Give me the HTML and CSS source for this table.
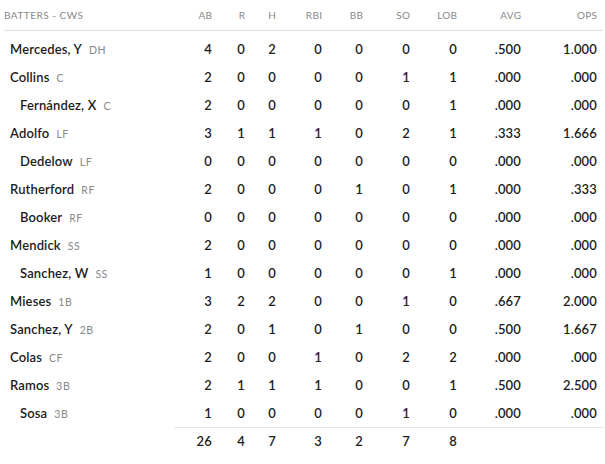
FILE: index.html
```html
<!DOCTYPE html>
<html>
<head>
<meta charset="utf-8">
<link rel="stylesheet" href="styles.css">
</head>
<body>
<div class="box">
  <div class="row head">
    <div class="name">BATTERS - CWS</div>
    <div>AB</div><div>R</div><div>H</div><div>RBI</div><div>BB</div><div>SO</div><div>LOB</div><div>AVG</div><div>OPS</div>
  </div>
  <div class="body">
    <div class="row"><div class="name">Mercedes, Y<span class="pos">DH</span></div><div>4</div><div>0</div><div>2</div><div>0</div><div>0</div><div>0</div><div>0</div><div>.500</div><div>1.000</div></div>
    <div class="row"><div class="name">Collins<span class="pos">C</span></div><div>2</div><div>0</div><div>0</div><div>0</div><div>0</div><div>1</div><div>1</div><div>.000</div><div>.000</div></div>
    <div class="row"><div class="name sub">Fernández, X<span class="pos">C</span></div><div>2</div><div>0</div><div>0</div><div>0</div><div>0</div><div>0</div><div>1</div><div>.000</div><div>.000</div></div>
    <div class="row"><div class="name">Adolfo<span class="pos">LF</span></div><div>3</div><div>1</div><div>1</div><div>1</div><div>0</div><div>2</div><div>1</div><div>.333</div><div>1.666</div></div>
    <div class="row"><div class="name sub">Dedelow<span class="pos">LF</span></div><div>0</div><div>0</div><div>0</div><div>0</div><div>0</div><div>0</div><div>0</div><div>.000</div><div>.000</div></div>
    <div class="row"><div class="name">Rutherford<span class="pos">RF</span></div><div>2</div><div>0</div><div>0</div><div>0</div><div>1</div><div>0</div><div>1</div><div>.000</div><div>.333</div></div>
    <div class="row"><div class="name sub">Booker<span class="pos">RF</span></div><div>0</div><div>0</div><div>0</div><div>0</div><div>0</div><div>0</div><div>0</div><div>.000</div><div>.000</div></div>
    <div class="row"><div class="name">Mendick<span class="pos">SS</span></div><div>2</div><div>0</div><div>0</div><div>0</div><div>0</div><div>0</div><div>0</div><div>.000</div><div>.000</div></div>
    <div class="row"><div class="name sub">Sanchez, W<span class="pos">SS</span></div><div>1</div><div>0</div><div>0</div><div>0</div><div>0</div><div>0</div><div>1</div><div>.000</div><div>.000</div></div>
    <div class="row"><div class="name">Mieses<span class="pos">1B</span></div><div>3</div><div>2</div><div>2</div><div>0</div><div>0</div><div>1</div><div>0</div><div>.667</div><div>2.000</div></div>
    <div class="row"><div class="name">Sanchez, Y<span class="pos">2B</span></div><div>2</div><div>0</div><div>1</div><div>0</div><div>1</div><div>0</div><div>0</div><div>.500</div><div>1.667</div></div>
    <div class="row"><div class="name">Colas<span class="pos">CF</span></div><div>2</div><div>0</div><div>0</div><div>1</div><div>0</div><div>2</div><div>2</div><div>.000</div><div>.000</div></div>
    <div class="row"><div class="name">Ramos<span class="pos">3B</span></div><div>2</div><div>1</div><div>1</div><div>1</div><div>0</div><div>0</div><div>1</div><div>.500</div><div>2.500</div></div>
    <div class="row"><div class="name sub">Sosa<span class="pos">3B</span></div><div>1</div><div>0</div><div>0</div><div>0</div><div>0</div><div>1</div><div>0</div><div>.000</div><div>.000</div></div>
  </div>
  <div class="row total">
    <div class="name blank"></div>
    <div class="line">26</div><div class="line">4</div><div class="line">7</div><div class="line">3</div><div class="line">2</div><div class="line">7</div><div class="line">8</div><div class="line"></div><div class="line"></div><div class="line"></div>
  </div>
</div>
</body>
</html>
```
FILE: styles.css
```css
* { box-sizing: border-box; }
body {
  margin: 0;
  background: #fff;
  font-family: Lato, "Open Sans", sans-serif;
  color: #1c1c1c;
}
.box {
  padding: 0 2px 0 4px;
}
.row {
  display: grid;
  grid-template-columns: 170px 38px 33px 31px 46px 41px 47px 47px 64px 76px 6px;
  align-items: center;
}
.row > div {
  text-align: right;
  white-space: nowrap;
}
.row > .name {
  text-align: left;
}
.head {
  height: 31px;
  border-bottom: 1px solid #e0e0e0;
  font-size: 10px;
  color: #888;
  letter-spacing: 0.5px;
  padding-bottom: 1px;
}
.head > div:not(.name) {
  letter-spacing: 0.3px;
  margin-right: -0.3px;
}
.body {
  padding-top: 4px;
}
.body .row {
  height: 28px;
  font-size: 13px;
  font-weight: 600;
  letter-spacing: 0.15px;
}
.body .name {
  padding-left: 6px;
}
.body .name.sub {
  padding-left: 16px;
}
.pos {
  font-size: 10.5px;
  font-weight: 400;
  color: #888;
  margin-left: 7px;
  letter-spacing: 0.5px;
}
.total {
  font-size: 13px;
  font-weight: 600;
  letter-spacing: 0.15px;
}
.total > div.line {
  border-top: 1px solid #e6e6e6;
  height: 26px;
  line-height: 26px;
}
```
